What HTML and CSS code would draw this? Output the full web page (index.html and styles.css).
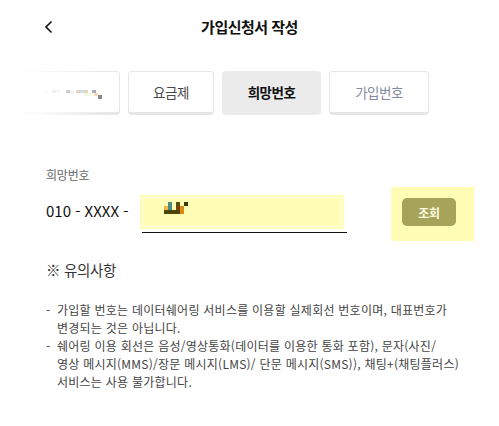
FILE: index.html
```html
<!DOCTYPE html>
<html lang="ko">
<head>
<meta charset="utf-8">
<link rel="stylesheet" href="styles.css">
</head>
<body>
<div class="page">
  <header class="header">
    <span class="back">
      <svg width="10" height="14" viewBox="0 0 10 14"><path d="M7.5 1.5 L2 7 L7.5 12.5" fill="none" stroke="#111" stroke-width="1.6"/></svg>
    </span>
    <h1 class="title">가입신청서 작성</h1>
  </header>

  <div class="tabs">
    <div class="tab tab-first">
      <svg class="blur" width="60" height="10" viewBox="0 0 60 10">
        <rect x="0" y="2" width="4" height="3" fill="#e9f3f5"/>
        <rect x="8" y="1" width="4" height="3" fill="#c9cdd0"/>
        <rect x="12" y="1" width="4" height="3" fill="#dde9ec"/>
        <rect x="22" y="1" width="4" height="3" fill="#8d9296"/>
        <rect x="26" y="2" width="4" height="3" fill="#e3e0ea"/>
        <rect x="32" y="1" width="4" height="3" fill="#d8b596"/>
        <rect x="36" y="1" width="4" height="3" fill="#b2c6d6"/>
        <rect x="40" y="1" width="4" height="3" fill="#e0bf9a"/>
        <rect x="40" y="4" width="4" height="3" fill="#e5f6e1"/>
        <rect x="44" y="4" width="4" height="3" fill="#f4f8d6"/>
        <rect x="48" y="1" width="4" height="3" fill="#8b9197"/>
        <rect x="50" y="4" width="4" height="3" fill="#f8cfa0"/>
        <rect x="54" y="6" width="4" height="4" fill="#6a6a6a"/>
      </svg>
    </div>
    <div class="tab tab-w86">요금제</div>
    <div class="tab tab-active">희망번호</div>
    <div class="tab tab-muted">가입번호</div>
    <div class="fade"></div>
  </div>

  <section class="form">
    <div class="label">희망번호</div>
    <div class="row">
      <span class="prefix">010 - XXXX -</span>
      <div class="field">
        <div class="hl">
          <svg class="pix" width="24" height="12" viewBox="0 0 24 12">
            <rect x="4" y="0" width="4" height="4" fill="#4f8b85"/>
            <rect x="12" y="0" width="4" height="4" fill="#5a4d0a"/>
            <rect x="20" y="0" width="4" height="4" fill="#3d3a05"/>
            <rect x="0" y="4" width="4" height="4" fill="#f2b94a"/>
            <rect x="4" y="4" width="4" height="4" fill="#4f8b85"/>
            <rect x="12" y="4" width="4" height="4" fill="#7a3f06"/>
            <rect x="16" y="4" width="4" height="4" fill="#d88a0a"/>
            <rect x="0" y="8" width="16" height="4" fill="#4d4505"/>
            <rect x="16" y="8" width="4" height="4" fill="#d88a0a"/>
          </svg>
        </div>
      </div>
      <div class="btn-wrap">
        <button class="btn">조회</button>
      </div>
    </div>
  </section>

  <section class="notes">
    <h2 class="notes-title">※ 유의사항</h2>
    <ul class="list">
      <li>가입할 번호는 데이터쉐어링 서비스를 이용할 실제회선 번호이며, 대표번호가<br>변경되는 것은 아닙니다.</li>
      <li>쉐어링 이용 회선은 음성/영상통화(데이터를 이용한 통화 포함), 문자(사진/<br>영상 메시지(MMS)/장문 메시지(LMS)/ 단문 메시지(SMS)), 채팅+(채팅플러스)<br>서비스는 사용 불가합니다.</li>
    </ul>
  </section>
</div>
</body>
</html>
```

FILE: styles.css
```css
* { box-sizing: border-box; margin: 0; padding: 0; }
body {
  margin: 0;
  background: #fff;
  font-family: "Noto Sans CJK KR", "Noto Sans", sans-serif;
  color: #111;
  width: 499px;
  height: 426px;
  overflow: hidden;
}
.page { width: 499px; }

.header {
  height: 54px;
  display: flex;
  align-items: center;
  justify-content: center;
  position: relative;
}
.back {
  position: absolute;
  left: 44px;
  top: 20px;
  display: flex;
}
.title {
  font-size: 15px;
  font-weight: 700;
  letter-spacing: -0.5px;
  color: #111;
  line-height: 20px;
}

.tabs {
  position: relative;
  margin-top: 17px;
  padding-left: 19px;
  display: flex;
  gap: 8px;
  height: 44px;
}
.tab {
  height: 44px;
  border: 1px solid #e6e6e6;
  border-bottom: 3px solid #e6e6e6;
  border-radius: 4px;
  background: #fff;
  display: flex;
  align-items: center;
  justify-content: center;
  font-size: 13.5px;
  letter-spacing: -0.5px;
  color: #4a4a4a;
  padding-bottom: 1px;
}
.tab-first { width: 101px; justify-content: flex-start; padding-left: 24px; }
.tab-w86 { width: 86px; }
.tab-active {
  width: 99px;
  background: #ebebeb;
  border-color: #ebebeb;
  color: #111;
  font-weight: 700;
}
.tab-muted { width: 100px; color: #7f8c9e; }
.blur { opacity: 0.9; margin-top: 4px; }
.fade {
  position: absolute;
  left: 0;
  top: 0;
  width: 115px;
  height: 46px;
  background: linear-gradient(to right, #fff 0%, rgba(255,255,255,0.85) 35%, rgba(255,255,255,0.2) 80%, rgba(255,255,255,0) 100%);
}

.form { padding-left: 46px; margin-top: 52px; }
.label {
  font-size: 12px;
  line-height: 16px;
  color: #666;
  letter-spacing: -0.2px;
}
.row {
  display: flex;
  align-items: flex-start;
  margin-top: 4px;
  height: 54px;
}
.prefix {
  font-size: 15px;
  line-height: 20px;
  margin-top: 14px;
  width: 94px;
  color: #111;
  white-space: nowrap;
}
.field {
  margin-top: 8px;
  width: 207px;
  height: 43px;
  position: relative;
}
.hl {
  width: 204px;
  height: 34px;
  background: #fffcb6;
  box-shadow: inset 0 0 0 2px #fffcb6, inset 0 0 0 3px #fffde6;
  padding: 7px 0 0 24px;
}
.pix { display: block; }
.field::after {
  content: "";
  position: absolute;
  left: 2px;
  right: 0;
  bottom: 5px;
  height: 1px;
  background: #111;
}
.btn-wrap {
  margin-left: 44px;
  width: 83px;
  height: 54px;
  background: #fffcb6;
  display: flex;
  align-items: flex-start;
  padding: 11px 0 0 11px;
}
.btn {
  width: 54px;
  height: 28px;
  border: 0;
  border-radius: 5px;
  background: #a6a35b;
  color: #fffbe0;
  font-family: inherit;
  font-size: 12px;
  font-weight: 700;
  letter-spacing: -0.3px;
}

.notes { padding-left: 46px; margin-top: 19px; }
.notes-title {
  font-size: 14.5px;
  font-weight: 400;
  line-height: 20px;
  color: #333;
  letter-spacing: -0.3px;
}
.list {
  list-style: none;
  margin-top: 21px;
  font-size: 12px;
  line-height: 18px;
  color: #444;
  letter-spacing: 0.25px;
}
.list li {
  position: relative;
  padding-left: 11px;
  white-space: nowrap;
}
.list li::before {
  content: "-";
  position: absolute;
  left: 0;
  top: 0;
}
```
